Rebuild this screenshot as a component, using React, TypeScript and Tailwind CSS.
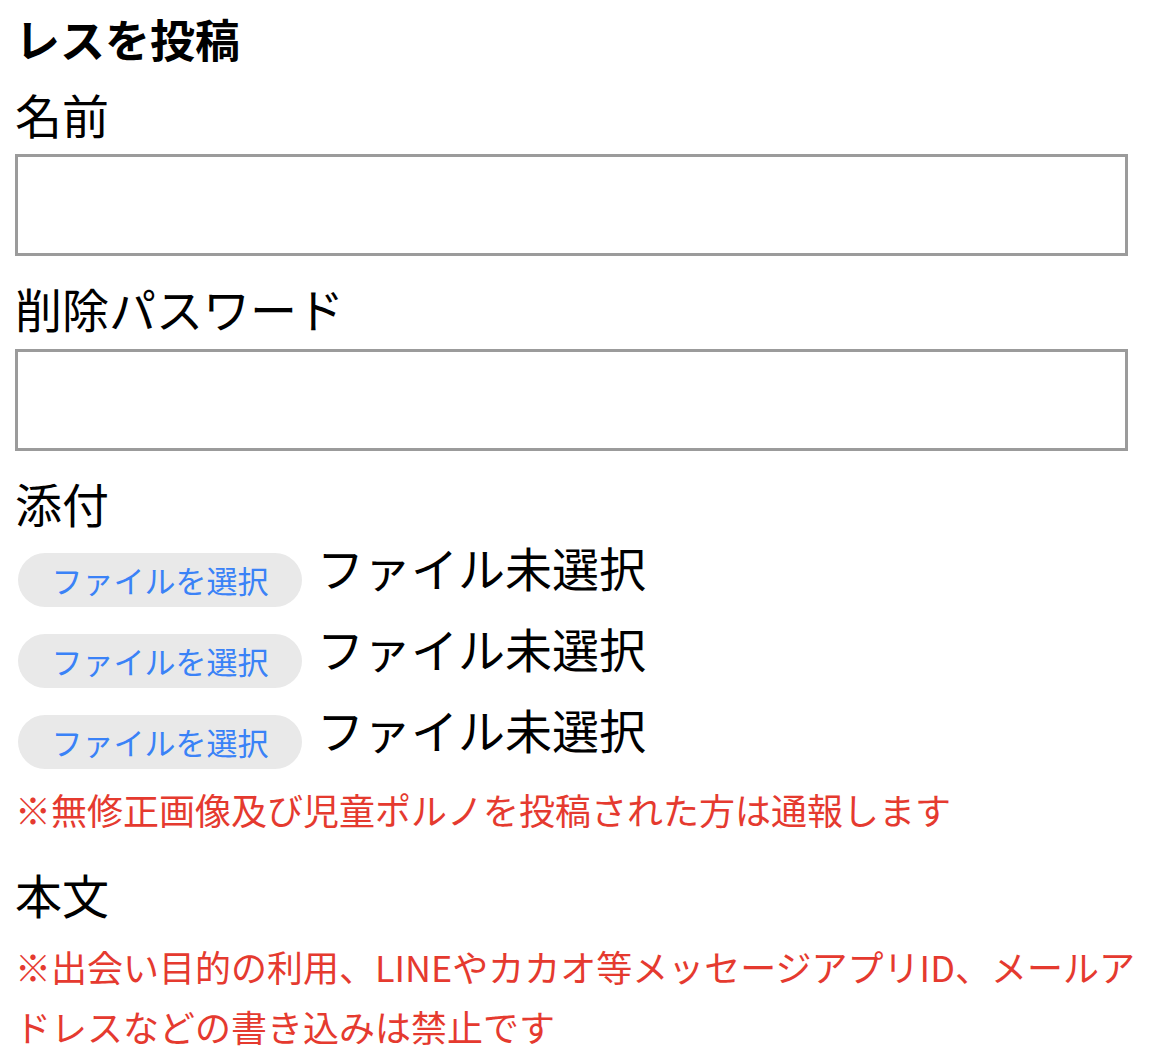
import React from "react";

const font = { fontFamily: '"Noto Sans CJK JP", "Noto Sans", sans-serif' };

function FileRow() {
  return (
    <div className="flex items-start h-[54px]">
      <div className="w-[284px] h-[54px] shrink-0 rounded-full bg-[#e9e9e9] flex items-center justify-center text-[31px] leading-[54px] text-[#3a82f7]">
        ファイルを選択
      </div>
      <div className="ml-[15px] -mt-[10px] text-[47px] leading-[48px] text-black">ファイル未選択</div>
    </div>
  );
}

export default function App() {
  return (
    <div className="w-[1170px] h-[1052px] overflow-hidden bg-white px-[15px] text-black" style={font}>
      <div className="pt-[15px] text-[45px] leading-[48px] font-bold">レスを投稿</div>
      <div className="mt-[27px] text-[47px] leading-[48px]">名前</div>
      <div className="mt-[16px] w-[1113px] h-[102px] border-[3px] border-[#9b9b9b]" />
      <div className="mt-[28px] text-[47px] leading-[48px]">削除パスワード</div>
      <div className="mt-[17px] w-[1113px] h-[102px] border-[3px] border-[#9b9b9b]" />
      <div className="mt-[28px] text-[47px] leading-[48px]">添付</div>
      <div className="mt-[26px] flex flex-col gap-[27px] pl-[3px]">
        <FileRow />
        <FileRow />
        <FileRow />
      </div>
      <div className="mt-[16px] text-[36px] leading-[48px] text-[#e53a2f]">
        ※無修正画像及び児童ポルノを投稿された方は通報します
      </div>
      <div className="mt-[37px] text-[47px] leading-[48px]">本文</div>
      <div className="mt-[18px] text-[36px] leading-[60px] text-[#e53a2f]">
        <span className="whitespace-nowrap">※出会い目的の利用、LINEやカカオ等メッセージアプリID、メールア</span>
        <br />
        ドレスなどの書き込みは禁止です
      </div>
    </div>
  );
}
